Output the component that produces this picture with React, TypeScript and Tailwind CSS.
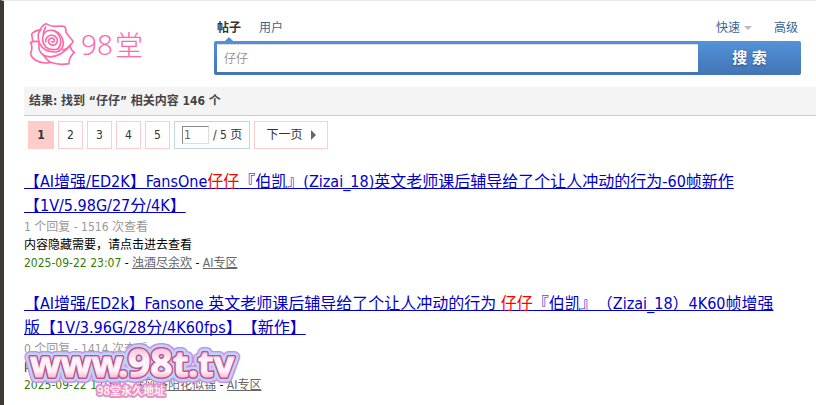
import type { ReactNode } from "react";

type Result = {
  title: ReactNode;
  replies: number;
  views: number;
  date: string;
  author: string;
  forum: string;
};

const results: Result[] = [
  {
    title: (
      <>
        【AI增强/ED2K】FansOne<Hit />『伯凯』(Zizai_18)英文老师课后辅导给了个让人冲动的行为-60帧新作
        <br />
        【1V/5.98G/27分/4K】
      </>
    ),
    replies: 1,
    views: 1516,
    date: "2025-09-22 23:07",
    author: "浊酒尽余欢",
    forum: "AI专区",
  },
  {
    title: (
      <>
        【AI增强/ED2k】Fansone 英文老师课后辅导给了个让人冲动的行为 <Hit />『伯凯』（Zizai_18）4K60帧增强
        <br />
        版【1V/3.96G/28分/4K60fps】【新作】
      </>
    ),
    replies: 0,
    views: 1414,
    date: "2025-09-22 17:30",
    author: "春风洛阳花似锦",
    forum: "AI专区",
  },
];

function Hit() {
  return <span className="text-[#ff0000]">仔仔</span>;
}

function Logo() {
  return (
    <a href="#" aria-label="98堂" className="mt-5 flex w-[190px] shrink-0 items-center self-start pl-1">
      <svg width="49" height="46" viewBox="84 60 147 138" fill="none" stroke="#ff69a8" strokeWidth="5" strokeLinejoin="round" strokeLinecap="round">
        {/* outer petals */}
        <path d="M98 119 L95 99 Q102 90 122 86 Q122 76 138 68 Q152 77 166 76 L185 75 Q196 75 197 82 Q196 94 204 102 L219 121 Q216 130 209 134 Q202 144 188 147" />
        <path d="M115 122 Q103 120 92 124 Q99 139 92 157 Q92 168 106 177 Q126 190 151 184 Q136 173 128 160" />
        <path d="M151 184 Q180 194 207 188 Q206 169 223 154 Q214 149 210 134" />
        {/* inner petals */}
        <path d="M122 86 Q108 101 119 128 Q132 154 168 153 Q191 149 190 124 Q186 97 163 89 Q141 84 131 99 Q122 119 137 138 Q154 151 174 143" />
        <path d="M118 124 Q111 151 131 163 Q153 174 181 159 Q196 151 210 134" />
        <path d="M137 78 Q132 87 130 98" />
        {/* heart of the rose */}
        <path d="M155 122 Q161 125 163 119 Q163 111 154 111 Q144 114 146 124 Q152 136 166 131 Q175 124 171 112 Q164 101 151 103 Q137 108 137 122" />
        <path d="M163 89 Q182 102 182 122 Q182 136 174 143" />
      </svg>
      <span className="ml-1 flex items-center text-[#ff69a8]">
        <span className="font-['Noto_Sans',sans-serif] text-[28px] leading-8 font-light">98</span>
        <span className="ml-0.5 font-['Noto_Sans_CJK_SC',sans-serif] text-[28px] leading-8 font-light">堂</span>
      </span>
    </a>
  );
}

function SearchBox() {
  return (
    <form className="mr-[15px] flex-1 pt-[18px]" onSubmit={(e) => e.preventDefault()}>
      <div className="flex h-[22px] justify-between px-[3px] leading-[18px] text-[#336699]">
        <div className="flex gap-[18px]">
          <a href="#" className="relative font-bold text-[#333]">
            帖子
            <span className="absolute top-[18px] left-2 border-x-4 border-b-4 border-x-transparent border-b-[#518bd1]" />
          </a>
          <a href="#">用户</a>
        </div>
        <div className="flex items-start gap-[22px]">
          <a href="#" className="flex h-[18px] items-center gap-1">
            快速
            <span className="border-x-4 border-t-4 border-x-transparent border-t-[#bbb]" />
          </a>
          <a href="#" className="flex h-[18px] items-center">高级</a>
        </div>
      </div>
      <div className="flex h-[34px] rounded-xs bg-linear-to-b from-[#5392d9] to-[#4275b5] p-[3px] pr-0">
        <input
          type="text"
          aria-label="搜索"
          defaultValue="仔仔"
          className="min-w-0 flex-1 border-t border-[#ddd] bg-white px-[7px] text-[#999] outline-none"
        />
        <button type="submit" className="w-[103px] text-[15px] leading-5 font-bold text-white [text-shadow:0_1px_2px_#2a4f80]">
          搜 索
        </button>
      </div>
    </form>
  );
}

function Pagination() {
  return (
    <nav className="flex gap-1 px-1 pt-[5px] text-[#333]">
      <strong className="flex h-7 w-[26px] items-center justify-center bg-[#ffcccc]">1</strong>
      {[2, 3, 4, 5].map((page) => (
        <a key={page} href="#" className="flex h-7 w-[25px] items-center justify-center border border-[#ffcccc]">
          {page}
        </a>
      ))}
      <label className="flex h-7 items-center gap-1 border border-[#c2d5e3] px-[7px]">
        <input
          type="text"
          aria-label="页码"
          defaultValue="1"
          className="h-[18px] w-[27px] border border-t-[#888] border-r-[#ddd] border-b-[#ddd] border-l-[#888] pl-px text-[#666] outline-none"
        />
        <span>/ 5 页</span>
      </label>
      <a href="#" className="flex h-7 items-center gap-[9px] border border-[#ffcccc] px-[11px]">
        下一页
        <span className="border-y-[5px] border-l-[5px] border-y-transparent border-l-[#666]" />
      </a>
    </nav>
  );
}

function Watermark() {
  return (
    <svg className="pointer-events-none absolute top-[339px] left-4" width="222" height="62" viewBox="0 0 222 62" strokeLinejoin="round">
      <defs>
        <linearGradient id="shine" gradientUnits="userSpaceOnUse" x1="0" y1="10" x2="0" y2="40">
          <stop offset="0" stopColor="#f9c9dd" />
          <stop offset="0.35" stopColor="#fff4f9" />
          <stop offset="0.7" stopColor="#fff4f9" />
          <stop offset="1" stopColor="#f5a3c6" />
        </linearGradient>
        <g id="site" className="font-['Open_Sans',sans-serif] font-bold">
          <text x="10" y="37" fontSize="36">www</text>
          <text x="98" y="37" fontSize="36">.</text>
          <text x="108" y="37" fontSize="39">98</text>
          <text x="153" y="37" fontSize="36">t</text>
          <text x="168" y="37" fontSize="36">.</text>
          <text x="178" y="37" fontSize="36">tv</text>
        </g>
        <text id="slogan" x="77" y="55" fontSize="11" className="font-['Noto_Sans_CJK_SC',sans-serif] font-bold">98堂永久地址</text>
      </defs>
      <use href="#site" fill="#cf8fe0" stroke="#cf8fe0" strokeWidth="12" />
      <use href="#site" fill="#b9d6fa" stroke="#b9d6fa" strokeWidth="9" />
      <use href="#site" fill="#c2508c" stroke="#c2508c" strokeWidth="4" />
      <use href="#site" fill="url(#shine)" stroke="url(#shine)" strokeWidth="1" />
      <use href="#slogan" fill="#d59ae0" stroke="#d59ae0" strokeWidth="4" />
      <use href="#slogan" fill="#fff0f6" stroke="#f08fba" strokeWidth="2" paintOrder="stroke" />
    </svg>
  );
}

export default function App() {
  return (
    <div className="relative min-h-screen border-t border-l-4 border-t-[#ececec] border-l-[#3b3836] bg-white pl-5 font-['DejaVu_Sans_Condensed','Noto_Sans_CJK_SC',sans-serif] text-[12px] leading-[18px] text-black [text-spacing-trim:space-all]">
      <header className="flex h-[86px]">
        <Logo />
        <SearchBox />
      </header>

      <h2 className="border-b border-[#ccc] bg-[#f4f4f4] px-[5px] py-[5px] font-bold text-[#444]">
        结果: 找到 <span>“仔仔”</span> 相关内容 146 个
      </h2>
      <Pagination />

      <ul className="flex flex-col gap-5 pt-[21px]">
        {results.map((result) => (
          <li key={result.author}>
            <h3 className="text-[16px] leading-6 whitespace-nowrap">
              <a href="#" className="text-[#0000cc] underline underline-offset-1 [text-decoration-skip-ink:none]">
                {result.title}
              </a>
            </h3>
            <p className="text-[#999]">
              {result.replies} 个回复 - {result.views} 次查看
            </p>
            <p>内容隐藏需要，请点击进去查看</p>
            <p>
              <span className="text-[#338000]">{result.date}</span> -{" "}
              <a href="#" className="text-[#666] underline">{result.author}</a> -{" "}
              <a href="#" className="text-[#666] underline">{result.forum}</a>
            </p>
          </li>
        ))}
      </ul>
      <Watermark />
    </div>
  );
}
